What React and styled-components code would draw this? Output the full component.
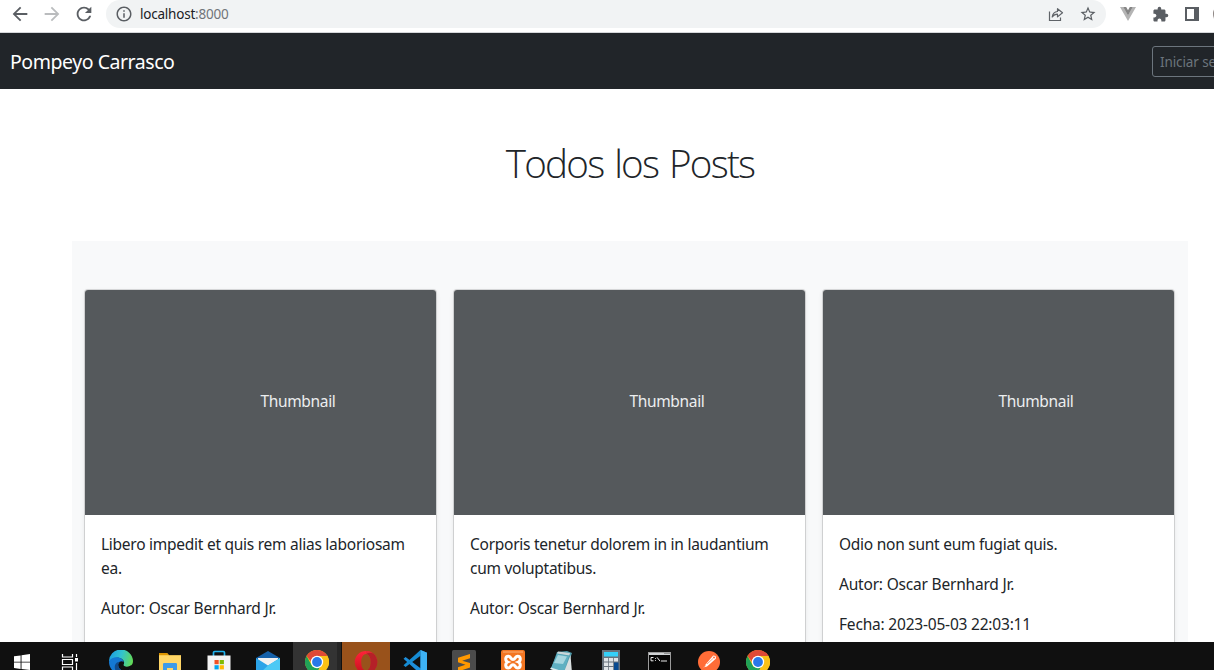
import React from "react";
import styled, { createGlobalStyle } from "styled-components";
import {
  MdArrowBack,
  MdArrowForward,
  MdRefresh,
  MdInfoOutline,
  MdStarBorder,
  MdExtension,
} from "react-icons/md";

const GlobalStyle = createGlobalStyle`
  *, *::before, *::after { box-sizing: border-box; }
  body {
    margin: 0;
    overflow: hidden;
    background: #fff;
    color: #212529;
    font-family: "Noto Sans", "Open Sans", sans-serif;
    font-size: 16px;
    line-height: 24px;
  }
  svg { display: block; flex: none; }
`;

const Screen = styled.div`
  display: flex;
  flex-direction: column;
  width: 1214px;
  height: 670px;
  overflow: hidden;
`;

const BrowserBar = styled.div`
  display: flex;
  flex: none;
  height: 33px;
  padding: 0 0 4px 10px;
  border-bottom: 1px solid #d5d7da;
  background: #fff;
  align-items: center;
  color: #5a5e63;
  overflow: hidden;
`;

const BarButton = styled.span`
  display: flex;
  flex: none;
  justify-content: center;
  width: ${(p) => p.$w || 32}px;
  color: ${(p) => (p.$muted ? "#babcbe" : "inherit")};
`;

const NavButtons = styled.div`
  display: flex;
  gap: 12px;
  margin-right: 12px;
`;

const AddressBar = styled.div`
  display: flex;
  flex: none;
  align-items: center;
  width: 1000px;
  height: 28px;
  padding: 0 2px 0 9px;
  border-radius: 14px;
  background: #f1f3f4;
`;

const Address = styled.span`
  flex: 1;
  margin-left: 7px;
  font-size: 13.5px;
  letter-spacing: -0.22px;
  color: #202124;
  span { color: #70757a; }
`;

const Avatar = styled.span`
  flex: none;
  width: 20px;
  height: 20px;
  margin-left: -1px;
  border-radius: 50%;
  background: #8d8583;
`;

const NavBar = styled.header`
  display: flex;
  flex: none;
  align-items: center;
  justify-content: space-between;
  height: 56px;
  padding-left: 10px;
  background: #212529;
  overflow: hidden;
`;

const Brand = styled.span`
  font-size: 19.5px;
  letter-spacing: -0.45px;
  line-height: 30px;
  padding-top: 1px;
  color: #fff;
`;

const LoginButton = styled.button`
  flex: none;
  width: 102px;
  height: 31px;
  margin-right: -40px;
  padding: 2px 0 0 7px;
  border: 1px solid #6c757d;
  border-radius: 3px;
  background: transparent;
  color: #6c757d;
  font: 13.5px/21px "Noto Sans", sans-serif;
  letter-spacing: -0.1px;
  text-align: left;
  white-space: nowrap;
`;

const Page = styled.main`
  flex: 1;
  min-height: 0;
  padding: 50px 26px 0 72px;
  overflow: hidden;
`;

const Title = styled.h1`
  margin: 0 0 54px;
  font-family: "Open Sans", "Noto Sans", sans-serif;
  font-size: 38.6px;
  font-weight: 300;
  line-height: 48px;
  letter-spacing: -1.75px;
  word-spacing: 2.5px;
  text-align: center;
`;

const Album = styled.section`
  display: grid;
  grid-template-columns: repeat(3, 1fr);
  align-items: start;
  gap: 16px;
  height: 600px;
  padding: 48px 13px 0 12px;
  background: #f8f9fa;
`;

const Card = styled.article`
  border: 1px solid rgba(0, 0, 0, 0.125);
  border-radius: 4px;
  background: #fff;
  background-clip: padding-box;
  box-shadow: 0 2px 4px rgba(0, 0, 0, 0.075);
`;

const Thumb = styled.div`
  display: flex;
  align-items: center;
  height: 225px;
  padding: 0 0 3px 50%;
  border-radius: 3px 3px 0 0;
  background: #55595c;
  color: #eceeef;
  font-size: 15.5px;
  letter-spacing: -0.35px;
`;

const CardBody = styled.div`
  padding: 17px 16px 16px;
`;

const Line = styled.p`
  margin: 0 0 16px;
  font-size: 15.5px;
  letter-spacing: ${(p) => (p.$lead ? -0.26 : -0.2)}px;
`;

const TaskBar = styled.footer`
  display: flex;
  flex: none;
  gap: 1px;
  height: 28px;
  background: #101010;
  overflow: hidden;
`;

const Task = styled.div`
  display: flex;
  flex: none;
  justify-content: center;
  width: ${(p) => p.$w || 48}px;
  height: 40px;
  padding-top: 8px;
  background: ${(p) => p.$bg || "transparent"};
`;

const Icon = ({ children, size = 24, box = "0 0 24 24" }) => (
  <svg width={size} height={size} viewBox={box}>{children}</svg>
);

const ShareIcon = () => (
  <svg width="16" height="16" viewBox="0 0 16 16" fill="none" stroke="#5f6368" strokeWidth="1.2">
    <path d="M1.500 5.500v9h11v-3" />
    <path d="M4.200 11c.5-3.600 2.200-5.300 5.300-5.500V2.700l5 4.100-5 4.100V8.200c-2.300 0-3.900.8-5.300 2.800z" strokeLinejoin="round" />
  </svg>
);

const VueIcon = () => (
  <svg width="16" height="14" viewBox="0 0 16 14">
    <path d="M0 0h3.300L8 8.200 12.700 0H16L8 14z" fill="#b4b4b4" />
    <path d="M3.200 0h3L8 3.200 9.800 0h3L8 8.400z" fill="#858585" />
  </svg>
);

const PanelIcon = () => (
  <svg width="14" height="14" viewBox="0 0 14 14">
    <path d="M0 0h14v14H0zM2 2v10h7V2z" fill="#5a5e63" fillRule="evenodd" />
  </svg>
);

const WindowsIcon = () => (
  <Icon>
    <path d="M4 6.300l6.600-.9v6.300H4zM11.500 5.200L20 4v7.700h-8.500zM4 12.600h6.600v6.300L4 18zM11.500 12.600H20V20l-8.500-1.100z" fill="#fff" />
  </Icon>
);

const TaskViewIcon = () => (
  <Icon>
    <path d="M4.500 4v3h10V4M4.500 20v-3h10v3M4.500 9.500h10v5h-10zM18.500 4v3M18.500 13v7" fill="none" stroke="#fff" strokeWidth="1.200" />
    <path d="M17 8h3v3.500h-3z" fill="#fff" />
  </Icon>
);

const EdgeIcon = () => (
  <Icon>
    <defs>
      <linearGradient id="edgeTop" x1="0" y1="0.3" x2="1" y2="0.5">
        <stop offset="0" stopColor="#1b9de2" />
        <stop offset="0.5" stopColor="#32c3cf" />
        <stop offset="1" stopColor="#62d957" />
      </linearGradient>
    </defs>
    <path d="M0 12A12 12 0 0 1 24 11c0 4-3 6-6 6-2.500 0-4-1-3.600-2.200C17 11 12 7 7 8 3 8.500 1 10 0 12z" fill="url(#edgeTop)" />
    <path d="M0 12C1 8.500 5 7 8.500 7.300c3.800.3 6 3 6.200 5.200-1-1.400-2.600-1.600-4-.7-3 2.200-1.500 8 4 9.200l6-1A12 12 0 0 1 0 12z" fill="#1478d4" />
    <path d="M10.700 11.800c-3 2.500-1.500 8 4 9.200 2.500.4 5-.7 7-2.200C18 23 13 25 9 23.400 4 20 5 12 10.700 11.800z" fill="#114a8b" />
    <path d="M14.500 12.500c.7 1-.8 2-.1 2.800.7 1.400 3.600 2 6.600.7l1.600-1.200-1 3c-3 2.600-7.600 2.400-9.300-.6-1.200-2.700.4-4.700 2.200-4.700z" fill="#101010" />
  </Icon>
);

const FolderIcon = () => (
  <Icon>
    <path d="M1 3h8l2 2.300h12V22H1z" fill="#f7c64b" />
    <path d="M1 3h8l2 2.300H1z" fill="#dc9400" />
    <path d="M1 5.500h22V22H1z" fill="#ffd667" />
    <path d="M5 21v-6.200A1.500 1.500 0 0 1 6.500 13h11a1.500 1.500 0 0 1 1.500 1.800V21h-4v-3H9v3z" fill="#3d9ae8" />
  </Icon>
);

const StoreIcon = () => (
  <Icon>
    <path d="M6.500 6V2.700c0-.8.5-1.200 1.200-1.200h8.600c.7 0 1.200.4 1.200 1.200V6" fill="none" stroke="#20b3ee" strokeWidth="1.700" />
    <path d="M.5 5.500h23V22h-23z" fill="#f4f4f4" />
    <path d="M7.500 10h4.200v4.200H7.500z" fill="#f25022" />
    <path d="M12.700 10h4.200v4.200h-4.200z" fill="#7fba00" />
    <path d="M7.500 15.200h4.200v4.200H7.500z" fill="#00a4ef" />
    <path d="M12.700 15.200h4.200v4.200h-4.200z" fill="#ffb900" />
  </Icon>
);

const MailIcon = () => (
  <Icon>
    <path d="M0 8L12 1l12 7v5H0z" fill="#1560a8" />
    <path d="M2 8h20v6l-10 5L2 14z" fill="#f1f1f1" />
    <path d="M0 8l12 7.500L24 8v15H0z" fill="#2ba3e8" />
    <path d="M24 8v15H4l8-7.500z" fill="#4cc9f5" />
  </Icon>
);

const ChromeIcon = () => (
  <Icon>
    <circle cx="12" cy="12" r="12" fill="#fbc116" />
    <path d="M1.600 6l5.700 10.500L15 17l-4 7A12 12 0 0 1 1.600 6z" fill="#20a257" />
    <path d="M12 6h10.400A12 12 0 0 1 11 24l6-9z" fill="#fbc116" />
    <path d="M1.600 6A12 12 0 0 1 22.400 6H12l-5 7z" fill="#df4936" />
    <circle cx="12" cy="12" r="6.200" fill="#fff" />
    <circle cx="12" cy="12" r="4.900" fill="#2878e8" />
  </Icon>
);

const OperaIcon = () => (
  <Icon>
    <defs>
      <linearGradient id="operaRing" x1="0" y1="0" x2="0" y2="1">
        <stop offset="0" stopColor="#ff2339" />
        <stop offset="1" stopColor="#c7101e" />
      </linearGradient>
    </defs>
    <path d="M12 1a11.300 11.300 0 1 0 0 22.600A11.300 11.300 0 0 0 12 1zm0 3c3 0 4.800 3.700 4.800 8.300s-1.800 8.300-4.800 8.300-4.800-3.700-4.800-8.300S9 4 12 4z" fill="url(#operaRing)" fillRule="evenodd" />
    <path d="M12 4c3 0 4.800 3.700 4.800 8.300s-1.800 8.300-4.800 8.300c2.500 2.400 5 2.300 7.400.6C24.600 16 24.600 8 19.400 3.500 17 1.900 14 2.300 12 4z" fill="#b52028" />
    <path d="M12 1a11 11 0 0 1 7.500 3C16.700 2 14.500 2.500 12 4z" fill="#e72634" />
  </Icon>
);

const CodeIcon = () => (
  <Icon>
    <path d="M17.500 0L24 2.700v18.600L17.500 24l-17-15.300L2.600 7 17.500 18.200z" fill="#1d8edb" />
    <path d="M.5 15.300L17.500 0v5.800L2.600 17z" fill="#168bd2" />
    <path d="M17.500 0L24 2.700v18.600L17.500 24z" fill="#3db2f5" />
  </Icon>
);

const SublimeIcon = () => (
  <Icon>
    <rect width="24" height="25" rx="1.500" fill="#4b4b4b" />
    <path d="M18 4v4.200l-7.800 2.500L18 13v4.500L6 21.500v-4.300l7.500-2.500L6 12.300V7.800z" fill="#ff9800" />
  </Icon>
);

const XamppIcon = () => (
  <Icon>
    <rect width="24" height="25" rx="2" fill="#f37623" />
    <path d="M2 2h20" stroke="#fbb078" strokeWidth="1" />
    <path d="M7.300 6.200c2.700 0 2.200 3.300 4.700 3.300s2-3.300 4.700-3.300c3.300 0 3.300 4.600.6 5.800 2.700 1.200 2.700 6-.6 6-2.700 0-2.200-3.200-4.700-3.200S10 18 7.300 18c-3.300 0-3.300-4.800-.6-6-2.700-1.200-2.700-5.800.6-5.800z" fill="none" stroke="#fff" strokeWidth="3" />
  </Icon>
);

const NotepadIcon = () => (
  <Icon>
    <path d="M7 2l10-1 5 2-7 20-14-4z" fill="#4d9aaa" />
    <path d="M8 1.500L20 3l-.7 2.500L7 3.500z" fill="#c9d6d8" />
    <path d="M7 4l12 2-5 16L1 18z" fill="#5fb0c2" />
    <path d="M8 5l9 1.500L13 14 4 13z" fill="#a6d6df" />
    <path d="M20.500 5L22 23l-8-1z" fill="#d9dfe0" />
    <path d="M1 17.500l14 4.500v2L0 19z" fill="#dcebed" />
  </Icon>
);

const CalculatorIcon = () => (
  <Icon>
    <path d="M3 0h18v24H3z" fill="#68727c" />
    <path d="M5 2h14v4.500H5z" fill="#35d0f8" />
    <path d="M5 8h4.200v3.600H5zM10 8h4.200v3.600H10zM15 8h4v3.600h-4zM5 12.500h4.200v3.600H5zM10 12.500h4.200v3.600H10zM5 17h4.200v3.600H5zM10 17h4.200v3.600H10z" fill="#dfe4e7" />
    <path d="M15 12.500h4.500V22H15z" fill="#074a91" />
  </Icon>
);

const TerminalIcon = () => (
  <Icon>
    <path d="M0 2h23v22H0z" fill="#9b9b9b" />
    <path d="M1 3h21v2H1z" fill="#d0d3d5" />
    <path d="M1 5h21v19H1z" fill="#050505" />
    <path d="M5.500 7.500H3v3.300h2.500M7.500 8v.8M7.500 10.200v.8M9 7.300l3 3.800M13 11h6" fill="none" stroke="#e8e8e8" strokeWidth="1" />
    <path d="M16.500 3.500h1M18.500 3.500h1M20.500 3.500h1" stroke="#505050" strokeWidth="1" />
  </Icon>
);

const PostmanIcon = () => (
  <Icon>
    <circle cx="12" cy="12" r="11" fill="#ff6c37" />
    <path d="M16 5.700a2.300 2.300 0 0 1 2.800 3L10 16.500l-3 .7 1.600-2.800z" fill="#fff" />
    <path d="M10 14l6-5.500M5.700 18l3-2.500" stroke="#ff8b60" strokeWidth=".8" />
    <circle cx="17" cy="7.500" r="1" fill="#ff6c37" />
  </Icon>
);

const posts = [
  {
    title: "Libero impedit et quis rem alias laboriosam ea.",
    author: "Oscar Bernhard Jr.",
    date: "2023-05-03 22:03:11",
  },
  {
    title: "Corporis tenetur dolorem in in laudantium cum voluptatibus.",
    author: "Oscar Bernhard Jr.",
    date: "2023-05-03 22:03:11",
  },
  {
    title: "Odio non sunt eum fugiat quis.",
    author: "Oscar Bernhard Jr.",
    date: "2023-05-03 22:03:11",
  },
];

const tasks = [
  { Glyph: WindowsIcon, w: 44 },
  { Glyph: TaskViewIcon, w: 50 },
  { Glyph: EdgeIcon, w: 49 },
  { Glyph: FolderIcon },
  { Glyph: StoreIcon },
  { Glyph: MailIcon },
  { Glyph: ChromeIcon, bg: "linear-gradient(90deg, #333 44px, #262626 44px)" },
  { Glyph: OperaIcon, bg: "#99521b" },
  { Glyph: CodeIcon },
  { Glyph: SublimeIcon },
  { Glyph: XamppIcon },
  { Glyph: NotepadIcon },
  { Glyph: CalculatorIcon },
  { Glyph: TerminalIcon },
  { Glyph: PostmanIcon },
  { Glyph: ChromeIcon },
];

export default function App() {
  return (
    <Screen>
      <GlobalStyle />
      <BrowserBar>
        <NavButtons>
          <BarButton $w={20}><MdArrowBack size={22} /></BarButton>
          <BarButton $w={20} $muted><MdArrowForward size={22} /></BarButton>
          <BarButton $w={20}><MdRefresh size={22} /></BarButton>
        </NavButtons>
        <AddressBar>
          <MdInfoOutline size={18} />
          <Address>localhost<span>:8000</span></Address>
          <BarButton><ShareIcon /></BarButton>
          <BarButton><MdStarBorder size={18} /></BarButton>
        </AddressBar>
        <BarButton $w={44}><VueIcon /></BarButton>
        <BarButton $w={20}><MdExtension size={17} /></BarButton>
        <BarButton $w={44}><PanelIcon /></BarButton>
        <Avatar />
      </BrowserBar>
      <NavBar>
        <Brand>Pompeyo Carrasco</Brand>
        <LoginButton>Iniciar sesión</LoginButton>
      </NavBar>
      <Page>
        <Title>Todos los Posts</Title>
        <Album>
          {posts.map((post) => (
            <Card key={post.title}>
              <Thumb>Thumbnail</Thumb>
              <CardBody>
                <Line $lead>{post.title}</Line>
                <Line>Autor: {post.author}</Line>
                <Line>Fecha: {post.date}</Line>
              </CardBody>
            </Card>
          ))}
        </Album>
      </Page>
      <TaskBar>
        {tasks.map(({ Glyph, w, bg }, i) => (
          <Task key={i} $w={w} $bg={bg}><Glyph /></Task>
        ))}
      </TaskBar>
    </Screen>
  );
}
